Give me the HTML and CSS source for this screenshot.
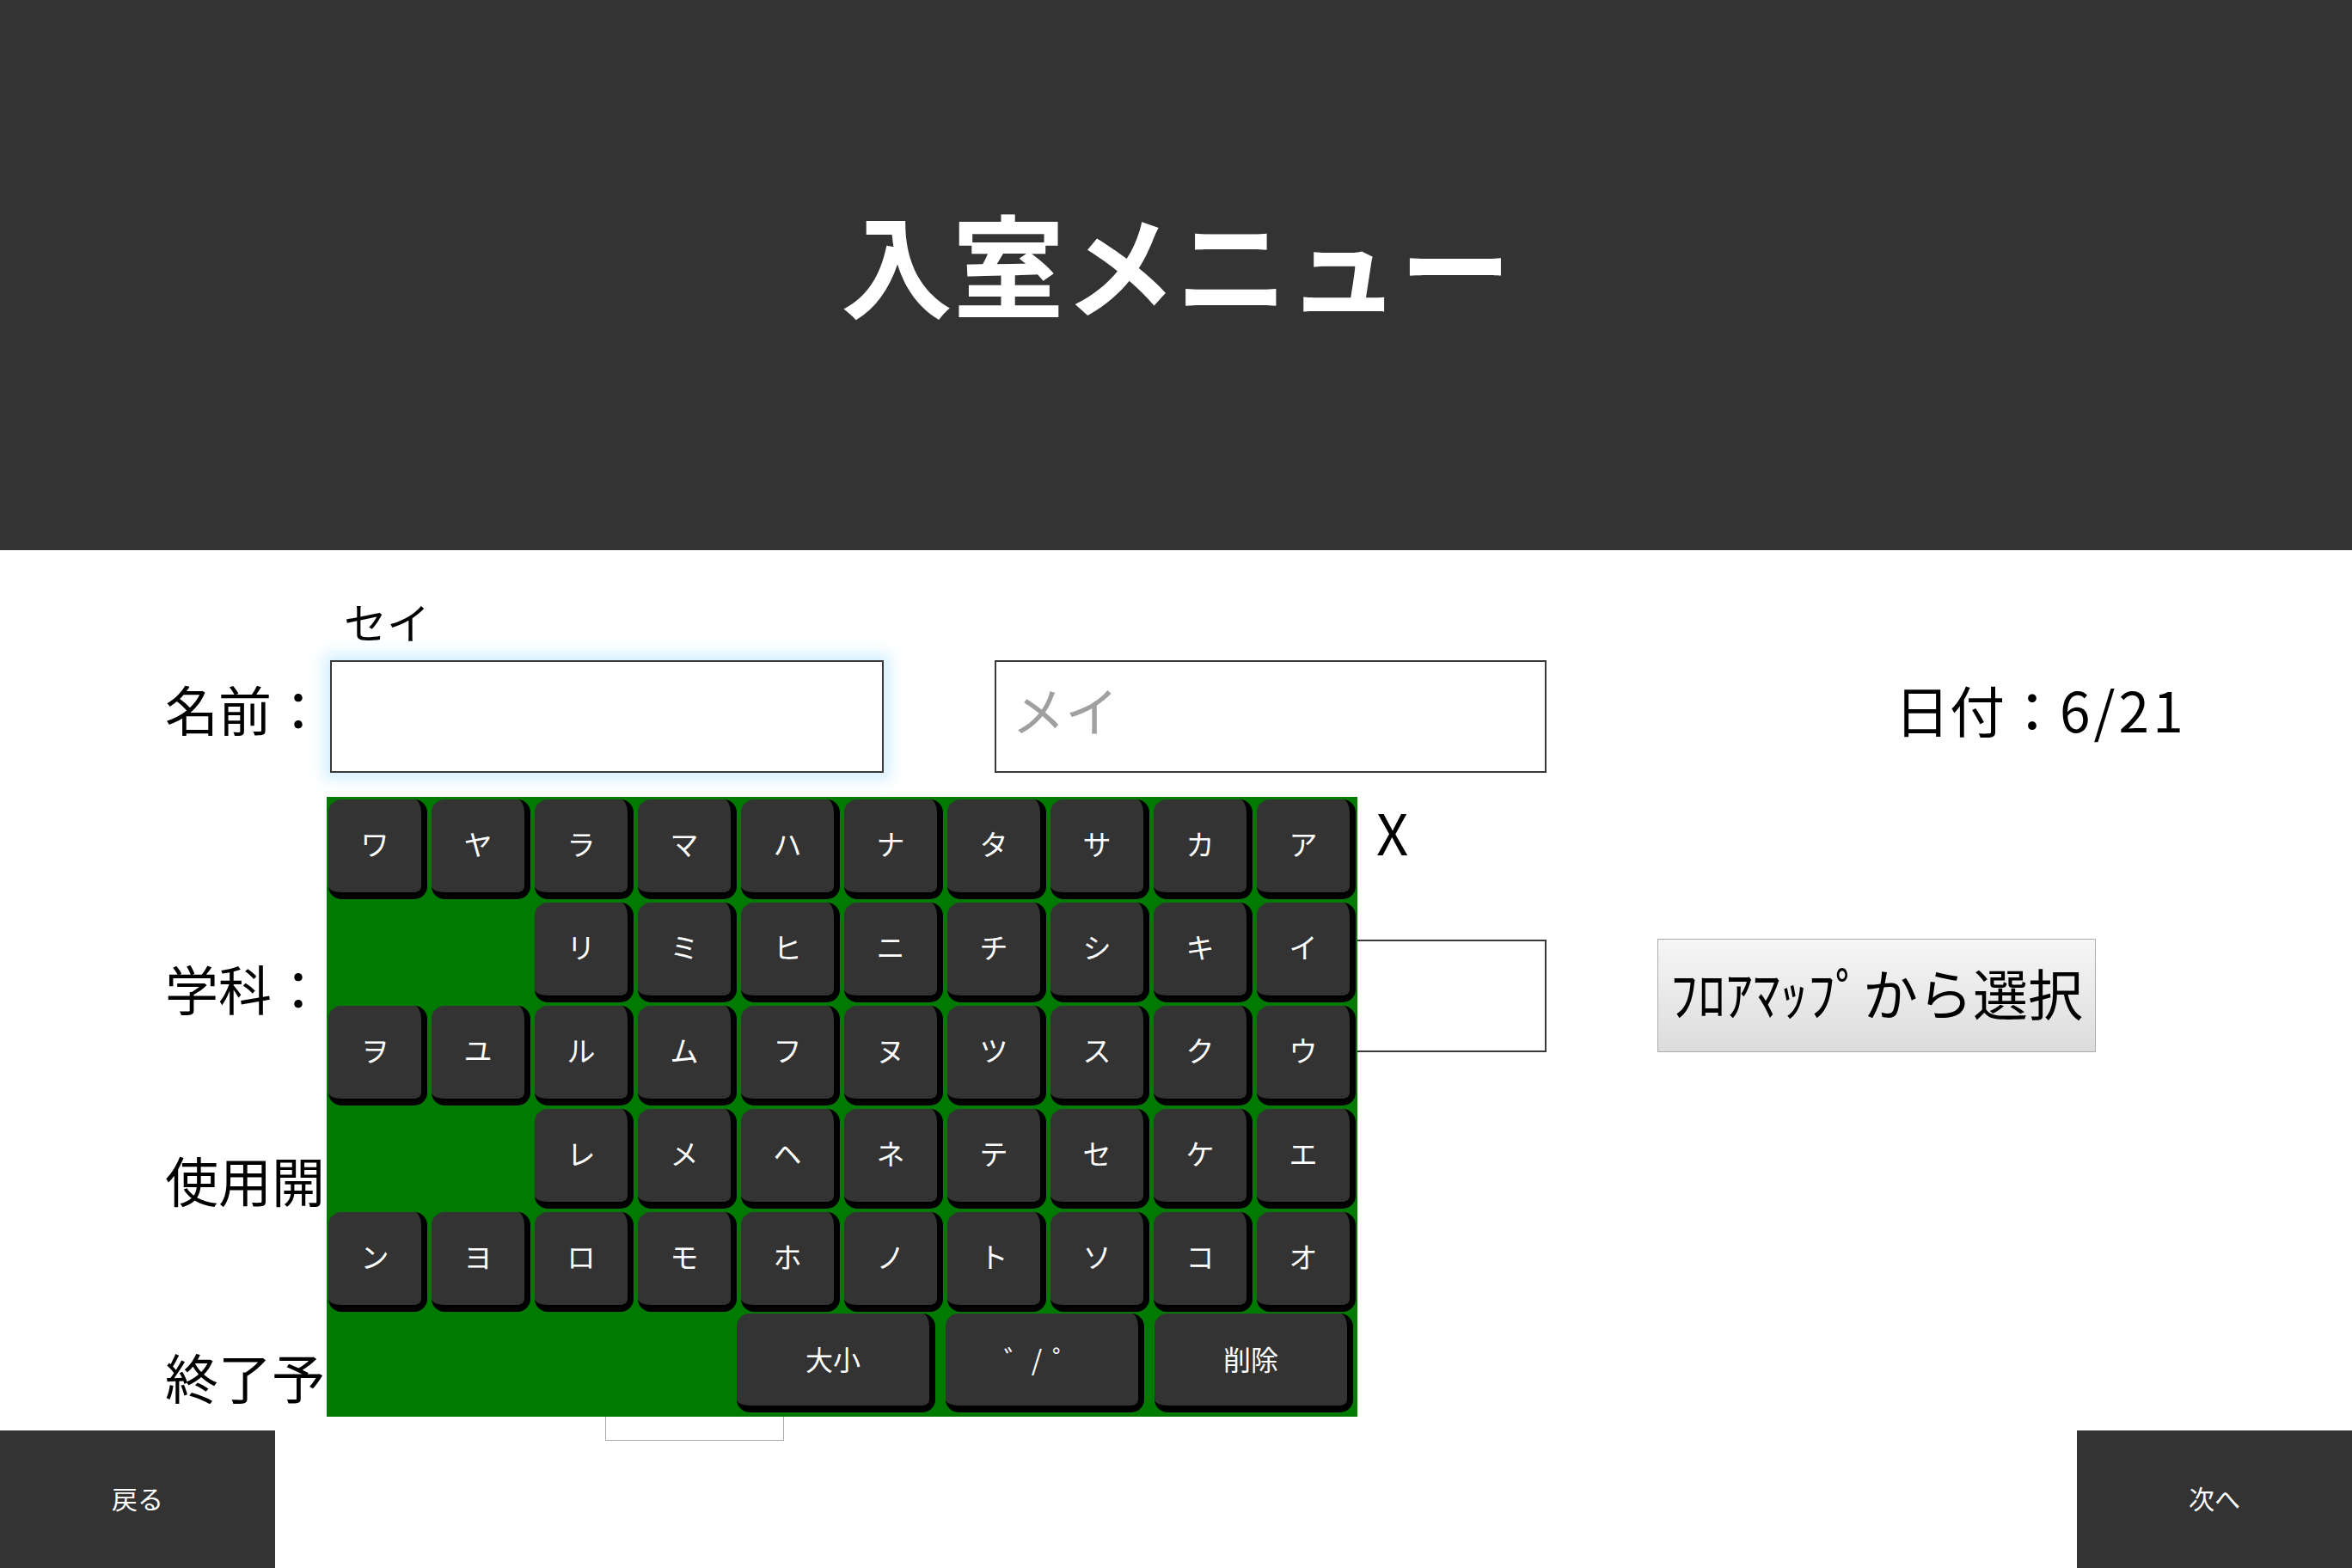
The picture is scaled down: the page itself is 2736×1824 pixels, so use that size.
FILE: index.html
```html
<!DOCTYPE html>
<html lang="ja">
<head>
<meta charset="utf-8">
<title>入室メニュー</title>
<link rel="stylesheet" href="styles.css">
</head>
<body>
<header class="header"><h1 class="title">入室メニュー</h1></header>
<main class="form">
  <div class="row row-name">
    <div class="label">名前：</div>
    <div class="field">
      <div class="caption">セイ</div>
      <input class="text-input input-sei focused" type="text">
    </div>
    <div class="field field-mei">
      <input class="text-input input-mei" type="text" placeholder="メイ">
    </div>
    <div class="date">日付：<span class="date-num">6/21</span></div>
  </div>
  <div class="row row-dept">
    <div class="label">学科：</div>
    <input class="text-input input-dept" type="text">
    <button class="map-btn" type="button">ﾌﾛｱﾏｯﾌﾟから選択</button>
  </div>
  <div class="row row-start">
    <div class="label label-wide">使用開始時刻：</div>
    <div class="time-box"></div>
  </div>
  <div class="row row-end">
    <div class="label label-wide">終了予定時刻：</div>
    <div class="time-box time-box-light"></div>
  </div>
</main>
<footer class="footer">
  <button class="nav-btn" type="button">戻る</button>
  <button class="nav-btn" type="button">次へ</button>
</footer>

<div class="keyboard">
  <div class="close">X</div>
  <div class="keys">
    <div class="key">ワ</div><div class="key">ヤ</div><div class="key">ラ</div><div class="key">マ</div><div class="key">ハ</div><div class="key">ナ</div><div class="key">タ</div><div class="key">サ</div><div class="key">カ</div><div class="key">ア</div>
    <div class="key col3">リ</div><div class="key">ミ</div><div class="key">ヒ</div><div class="key">ニ</div><div class="key">チ</div><div class="key">シ</div><div class="key">キ</div><div class="key">イ</div>
    <div class="key">ヲ</div><div class="key">ユ</div><div class="key">ル</div><div class="key">ム</div><div class="key">フ</div><div class="key">ヌ</div><div class="key">ツ</div><div class="key">ス</div><div class="key">ク</div><div class="key">ウ</div>
    <div class="key col3">レ</div><div class="key">メ</div><div class="key">ヘ</div><div class="key">ネ</div><div class="key">テ</div><div class="key">セ</div><div class="key">ケ</div><div class="key">エ</div>
    <div class="key">ン</div><div class="key">ヨ</div><div class="key">ロ</div><div class="key">モ</div><div class="key">ホ</div><div class="key">ノ</div><div class="key">ト</div><div class="key">ソ</div><div class="key">コ</div><div class="key">オ</div>
  </div>
  <div class="func-row">
    <div class="key key-wide">大小</div>
    <div class="key key-wide">゛<span class="slash">/</span>゜</div>
    <div class="key key-wide">削除</div>
  </div>
</div>
</body>
</html>
```

FILE: styles.css
```css
* { box-sizing: border-box; }

html, body {
  margin: 0;
  padding: 0;
}

body {
  width: 2736px;
  height: 1824px;
  overflow: hidden;
  position: relative;
  display: flex;
  flex-direction: column;
  background: #ffffff;
  color: #000;
  font-family: "Noto Sans CJK JP", "Noto Sans", sans-serif;
}

.header {
  height: 640px;
  flex: 0 0 640px;
  background: #333333;
  display: flex;
  align-items: center;
  justify-content: center;
  padding-bottom: 34px;
}

.title {
  margin: 0;
  color: #ffffff;
  font-size: 130px;
  font-weight: 700;
  line-height: 1;
}

.form {
  flex: 1 1 0;
  min-height: 0;
  padding: 52px 0 0 192px;
}

.row {
  display: flex;
  align-items: flex-end;
}

.label {
  width: 192px;
  flex: 0 0 192px;
  height: 131px;
  line-height: 113px;
  padding-bottom: 18px;
  font-size: 62px;
  white-space: nowrap;
}

.label-wide {
  width: 512px;
  flex: 0 0 512px;
}

.field {
  display: flex;
  flex-direction: column;
}

.caption {
  height: 60px;
  line-height: 60px;
  font-size: 50px;
  padding-left: 16px;
  margin-bottom: 16px;
}

.text-input {
  height: 131px;
  border: 2px solid #3a3a3a;
  background: #fff;
  font-family: "Noto Sans CJK JP", "Noto Sans", sans-serif;
  font-size: 62px;
  padding: 0 0 18px 18px;
  outline: none;
  margin: 0;
  border-radius: 0;
}

.text-input::placeholder {
  color: #a0a0a0;
}

.focused {
  box-shadow: 0 0 16px 8px #d4f0ff;
}

.input-sei { width: 644px; }

.field-mei { margin-left: 129px; }

.input-mei { width: 642px; }

.date {
  margin-left: 405px;
  height: 131px;
  line-height: 113px;
  padding-bottom: 18px;
  font-size: 64px;
  white-space: nowrap;
}

.date-num { letter-spacing: 4px; }

.row-dept { margin-top: 193px; }

.input-dept { width: 1415px; }

.map-btn {
  margin-left: 129px;
  width: 510px;
  height: 132px;
  border: 1px solid #acacac;
  background: linear-gradient(#f6f6f6, #dcdcdc);
  font-family: "Noto Sans CJK JP", "Noto Sans", sans-serif;
  font-size: 64px;
  color: #000;
  padding: 0 0 10px 0;
  white-space: nowrap;
}

.row-start { margin-top: 92px; }

.row-end { margin-top: 98px; }

.time-box {
  width: 208px;
  height: 131px;
  border: 2px solid #3a3a3a;
}

.time-box-light {
  border: 1px solid #ababab;
}

.footer {
  height: 160px;
  flex: 0 0 160px;
  display: flex;
  justify-content: space-between;
  position: relative;
}

.nav-btn {
  width: 320px;
  height: 160px;
  background: #333333;
  color: #ffffff;
  border: none;
  padding: 0 0 4px 0;
  font-family: "Noto Sans CJK JP", "Noto Sans", sans-serif;
  font-size: 30px;
}

/* software keyboard overlay */
.keyboard {
  position: absolute;
  left: 380px;
  top: 927px;
  width: 1199px;
  height: 721px;
  background: #007a00;
  padding: 3px 2px 0 2px;
}

.close {
  position: absolute;
  left: calc(100% + 22px);
  top: 8px;
  font-size: 65px;
  line-height: 1;
  font-weight: 400;
  color: #000;
}

.keys {
  display: grid;
  grid-template-columns: repeat(10, 115px);
  grid-auto-rows: 116px;
  column-gap: 5px;
  row-gap: 4px;
}

.key {
  background: #333333;
  color: #ffffff;
  border-right: 7px solid #000;
  border-bottom: 8px solid #000;
  border-radius: 15px;
  display: flex;
  align-items: center;
  justify-content: center;
  font-size: 33px;
  line-height: 1;
  padding-bottom: 6px;
}

.col3 { grid-column-start: 3; }

.func-row {
  display: flex;
  justify-content: flex-end;
  gap: 12px;
  padding-right: 3px;
  margin-top: 2px;
}

.key-wide {
  width: 231px;
  height: 115px;
  font-size: 32px;
  padding-bottom: 4px;
}

.slash { margin: 0 12px 0 0; }
```
